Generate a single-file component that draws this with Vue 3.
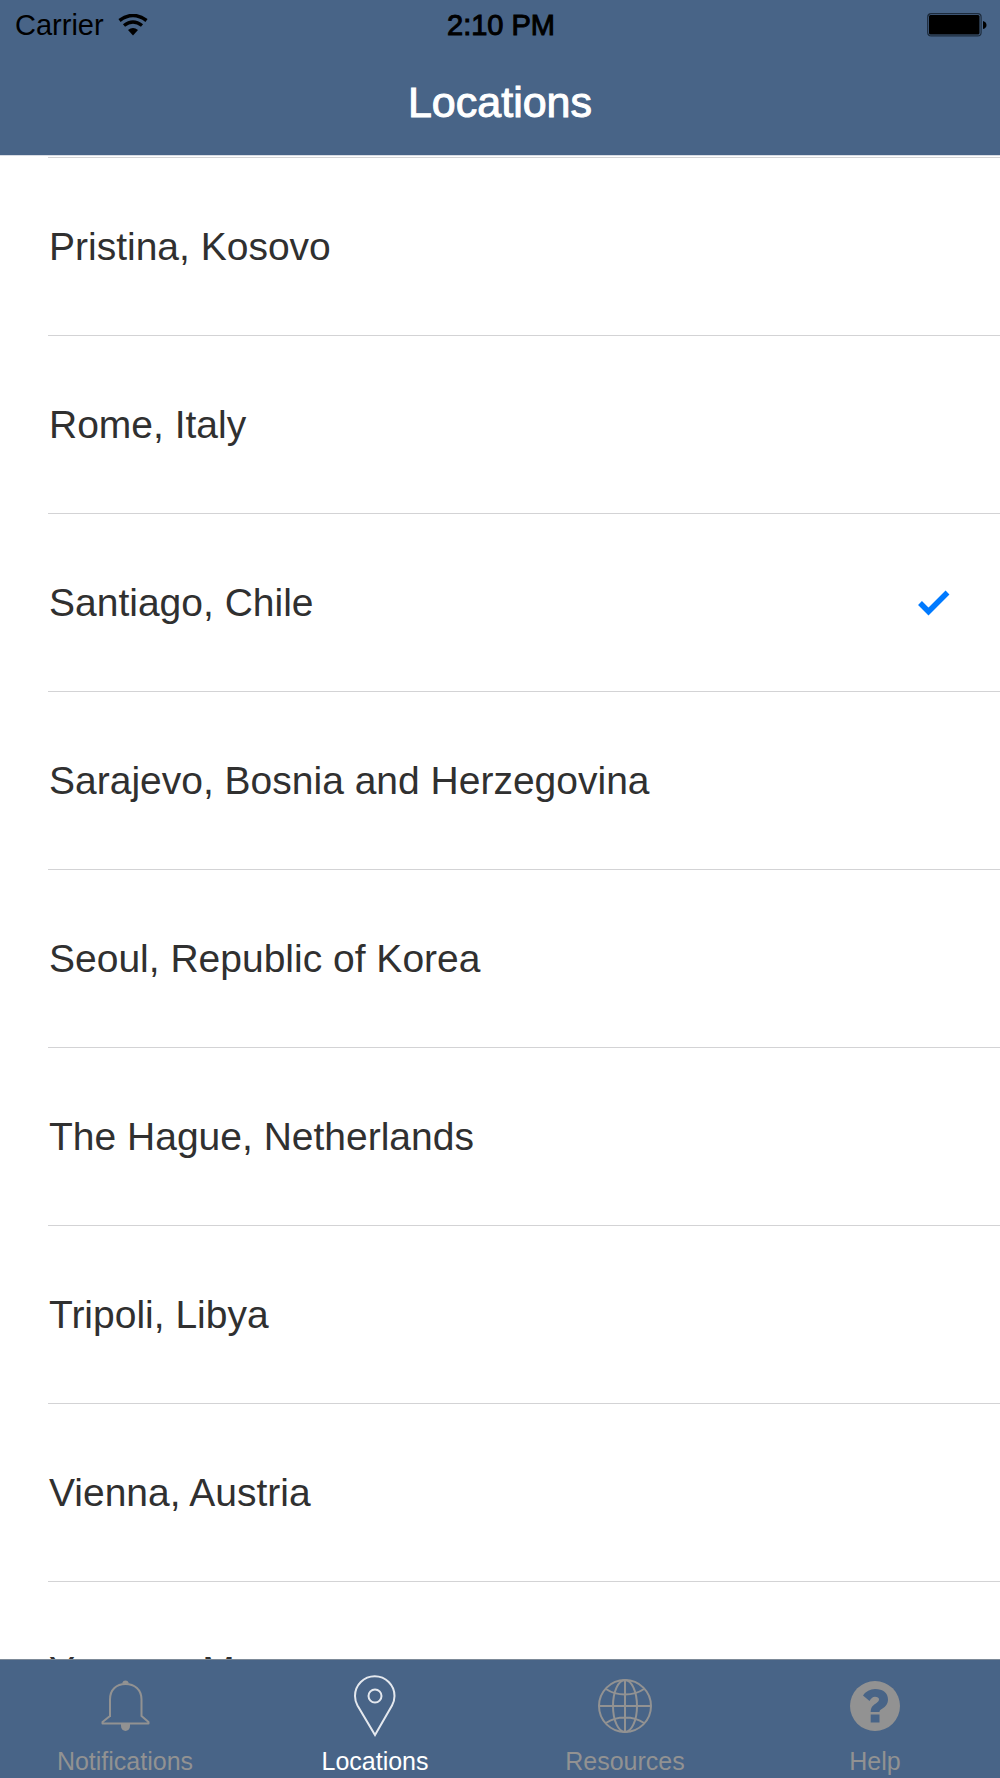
<script setup>
import { ref } from 'vue'

const locations = [
  'Pristina, Kosovo',
  'Rome, Italy',
  'Santiago, Chile',
  'Sarajevo, Bosnia and Herzegovina',
  'Seoul, Republic of Korea',
  'The Hague, Netherlands',
  'Tripoli, Libya',
  'Vienna, Austria',
  'Yangon, Myanmar',
]
const selected = ref('Santiago, Chile')

const tabs = ['Notifications', 'Locations', 'Resources', 'Help']
const activeTab = ref('Locations')
</script>

<template>
  <div class="screen">
    <header class="top">
      <div class="status">
        <div class="carrier">
          <span>Carrier</span>
          <svg class="wifi" viewBox="0 0 30 22" aria-hidden="true">
            <g fill="none" stroke="#000">
              <path d="M1.5 6.500Q15-3.500 28.500 6.500" stroke-width="3.600" />
              <path d="M6 11.500Q15 4.500 24 11.500" stroke-width="3.400" />
            </g>
            <path d="M10 16Q15 12 20 16L15 21.500Z" />
          </svg>
        </div>
        <time class="clock">2:10 PM</time>
        <svg class="battery" viewBox="0 0 60 24" aria-label="Battery full" role="img">
          <rect x="0.700" y="0.700" width="53.400" height="22.200" rx="3.500" fill="none" stroke="#1d2b3c" stroke-width="1.200" />
          <rect x="2" y="2" width="50.500" height="19.500" rx="1.500" />
          <path d="M56 8Q59.500 9 59.500 12T56 16Z" />
        </svg>
      </div>
      <h1 class="title">Locations</h1>
    </header>

    <main class="list" role="radiogroup" aria-label="Locations">
      <label v-for="place in locations" :key="place" class="row">
        <input v-model="selected" class="choice" type="radio" name="location" :value="place" />
        <span class="place">{{ place }}</span>
        <svg v-if="selected === place" class="check" viewBox="0 0 32 26" aria-hidden="true">
          <path d="M2 13L10.500 21.500L29.500 2.500" fill="none" stroke="#007aff" stroke-width="5.500" />
        </svg>
      </label>
    </main>

    <nav class="tabs" aria-label="Main">
      <button
        v-for="tab in tabs"
        :key="tab"
        type="button"
        class="tab"
        :class="{ active: tab === activeTab }"
        @click="activeTab = tab"
      >
        <svg v-if="tab === 'Notifications'" class="icon" viewBox="0 0 64 64" aria-hidden="true">
          <path d="M17 43V25.500C17 15.500 23.500 10 32.500 10S48.500 15.500 48.500 25.500V42L55.500 48V49.500H9.500V48L17 42" fill="none" stroke="currentColor" stroke-width="2" stroke-linejoin="round" />
          <path d="M29.500 9.500V8.500Q30 6.500 32.500 6.500T35.500 8.500V9.500Z" fill="currentColor" />
          <path d="M28 50H37V52A4.500 5 0 0 1 28 52Z" fill="currentColor" />
        </svg>
        <svg v-else-if="tab === 'Locations'" class="icon" viewBox="0 0 64 64" fill="none" stroke="currentColor" stroke-width="2" aria-hidden="true">
          <path d="M32 61L14.500 31.500Q12 27 12 22A19.700 19.700 0 0 1 51.500 22Q51.500 27 49 31.500Z" />
          <circle cx="32" cy="22" r="6.500" />
        </svg>
        <svg v-else-if="tab === 'Resources'" class="icon" viewBox="0 0 64 64" fill="none" stroke="currentColor" stroke-width="2" aria-hidden="true">
          <circle cx="32" cy="32" r="26" />
          <ellipse cx="32" cy="32" rx="12" ry="26" />
          <path d="M32 6V58M6 32H58M13 15Q21 20.500 32 20.500T51 15M13 49Q21 43.500 32 43.500T51 49" />
        </svg>
        <svg v-else class="icon" viewBox="0 0 64 64" aria-hidden="true">
          <circle cx="32" cy="32" r="25" fill="currentColor" />
          <path d="M20 21.500Q24.500 15 32 15C40 15 45 19 45 25.500C45 30 42.500 32.500 39.500 34.500C37 36 36.500 36.500 36.500 38H27.700C27.700 34 29 32 32.500 29.700C35 28 36 27 36 25.500C36 23.800 34.500 22.800 32 22.800C29.500 22.800 28 24.500 26.500 27Z" fill="#486487" />
          <rect x="27.700" y="40.500" width="8.800" height="8" fill="#486487" />
        </svg>
        <span>{{ tab }}</span>
      </button>
    </nav>
  </div>
</template>

<style>
body {
  margin: 0;
}
</style>

<style scoped>
.screen {
  display: flex;
  flex-direction: column;
  height: 100vh;
  background: #fff;
  color: #303030;
  font-family: "Liberation Sans", Arial, sans-serif;
}

.top {
  flex: none;
  padding-bottom: 29px;
  background: #486487;
}

.status {
  display: grid;
  grid-template-columns: 1fr auto 1fr;
  align-items: center;
  height: 50px;
  padding: 0 13px 0 15px;
  color: #000;
  font-size: 29px;
  line-height: 34px;
}

.carrier {
  display: flex;
  align-items: center;
  gap: 14px;
}

.wifi {
  width: 30px;
  height: 22px;
}

.clock {
  -webkit-text-stroke: 1px currentColor;
}

.battery {
  justify-self: end;
  width: 60px;
  height: 24px;
}

.title {
  margin: 0;
  padding-top: 28px;
  color: #fff;
  font-size: 43px;
  font-weight: 400;
  line-height: 48px;
  text-align: center;
  -webkit-text-stroke: 1px currentColor;
}

.title,
.clock {
  white-space: nowrap;
}

.list {
  flex: 1;
  min-height: 0;
  padding-top: 1px;
  overflow: hidden;
  border-top: 1px solid #d8dce4;
}

.row {
  display: flex;
  align-items: center;
  justify-content: space-between;
  box-sizing: border-box;
  height: 178px;
  margin-left: 48px;
  padding-right: 50px;
  padding-left: 1px;
  border-top: 1px solid #d3d3d5;
  font-size: 39px;
  line-height: 46px;
}

.choice {
  position: absolute;
  opacity: 0;
}

.check {
  flex: none;
  width: 32px;
  height: 26px;
}

.tabs {
  display: flex;
  flex: none;
  box-sizing: border-box;
  height: 119px;
  border-top: 1px solid #7d8a98;
  background: #486487;
}

.tab {
  display: flex;
  flex: 1;
  flex-direction: column;
  align-items: center;
  gap: 8px;
  padding: 14px 0 0;
  border: 0;
  background: none;
  color: #929292;
  font: 25px/30px "Liberation Sans", Arial, sans-serif;
}

.tab.active {
  color: #fff;
}

.icon {
  width: 64px;
  height: 64px;
}

.active .icon {
  color: #e4e8ee;
}
</style>
